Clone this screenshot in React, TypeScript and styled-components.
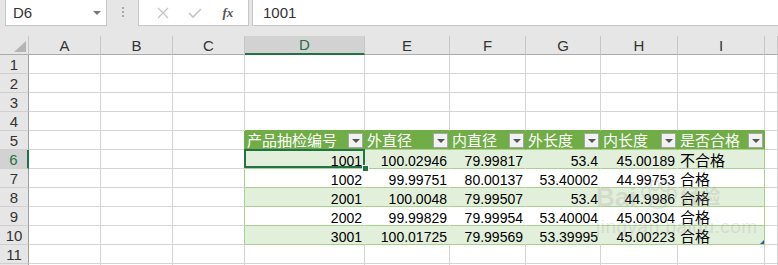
import { Fragment } from "react";
import styled, { createGlobalStyle } from "styled-components";

const GlobalStyle = createGlobalStyle`
  html, body { margin: 0; padding: 0; background: #fff; }
  body { font-family: "Liberation Sans", "Noto Sans CJK SC", sans-serif; }
`;

const GRID = "#d4d4d4";
const HEAD_BG = "#e6e6e6";
const SEL_BG = "#d2d2d2";
const XL_GREEN = "#217346";
const T_HEAD = "#70ad47";
const T_BAND = "#e2efda";
const T_LINE = "#a9d08e";

const Page = styled.div`
  position: relative;
  width: 778px;
  height: 265px;
  overflow: hidden;
  background: ${HEAD_BG};
`;

const FormulaBar = styled.div`
  display: flex;
  height: 26px;
  margin-bottom: 10px;
`;

const Box = styled.div`
  display: flex;
  align-items: center;
  box-sizing: border-box;
  height: 26px;
  background: #fff;
  border: 1px solid #c6c6c6;
  border-top: none;
`;

const NameBox = styled(Box)`
  margin-left: 5px;
  width: 102px;
  padding: 0 5px 0 7px;
  justify-content: space-between;
  font-size: 15px;
  color: #333;
`;

const Caret = styled.span`
  width: 0;
  height: 0;
  border-left: 4px solid transparent;
  border-right: 4px solid transparent;
  border-top: 4px solid #777;
`;

const Grip = styled.div`
  width: 31px;
  display: flex;
  flex-direction: column;
  align-items: center;
  justify-content: center;
  gap: 2px;
  padding-bottom: 2px;

  span {
    width: 2px;
    height: 2px;
    background: #a8a8a8;
  }
`;

const ButtonBox = styled(Box)`
  width: 111px;
  justify-content: space-around;
  padding: 0 4px 0 8px;
`;

const BarIcon = styled.span<{ $on?: boolean }>`
  display: flex;
  width: 20px;
  justify-content: center;
  color: ${(p) => (p.$on ? "#555" : "#c4c4c4")};
  font-family: "Liberation Serif", serif;
  font-style: italic;
  font-weight: bold;
  font-size: 13px;
`;

const InputBox = styled(Box)`
  flex: 1;
  margin-left: 3px;
  border-right: none;
  padding-left: 10px;
  font-size: 15px;
  color: #333;
`;

const Sheet = styled.div`
  display: grid;
  grid-template-columns: 29px 72px 72px 72px 120px 85px 76px 75px 77px 87px 1fr;
  grid-auto-rows: 19px;
`;

const Corner = styled.div`
  box-sizing: border-box;
  display: flex;
  align-items: flex-end;
  justify-content: flex-end;
  padding: 0 2px 2px 0;
  border-right: 1px solid #c6c6c6;
  border-bottom: 1px solid #ababab;
`;

const ColHead = styled.div<{ $sel?: boolean }>`
  box-sizing: border-box;
  display: flex;
  align-items: center;
  justify-content: center;
  background: ${(p) => (p.$sel ? SEL_BG : HEAD_BG)};
  border-right: 1px solid #c6c6c6;
  border-bottom: ${(p) => (p.$sel ? `2px solid ${XL_GREEN}` : "1px solid #ababab")};
  font-size: 15px;
  color: ${(p) => (p.$sel ? XL_GREEN : "#333")};
`;

const RowHead = styled.div<{ $sel?: boolean }>`
  box-sizing: border-box;
  display: flex;
  align-items: center;
  justify-content: center;
  padding-top: 1px;
  background: ${(p) => (p.$sel ? SEL_BG : HEAD_BG)};
  border-right: ${(p) => (p.$sel ? `2px solid ${XL_GREEN}` : "1px solid #9e9e9e")};
  border-bottom: 1px solid #cfcfcf;
  font-size: 15px;
  color: ${(p) => (p.$sel ? XL_GREEN : "#333")};
`;

const Cell = styled.div<{ $bg: string; $rb: string; $bb: string; $align: string }>`
  position: relative;
  box-sizing: border-box;
  display: flex;
  align-items: flex-end;
  justify-content: ${(p) => p.$align};
  padding: 0 2px;
  background: ${(p) => p.$bg};
  border-right: 1px solid ${(p) => p.$rb};
  border-bottom: 1px solid ${(p) => p.$bb};
  font-size: 14px;
  line-height: 14px;
  color: #000;
  white-space: nowrap;
`;

const HeadCell = styled(Cell)`
  align-items: center;
  justify-content: space-between;
  padding: 0 1px 0 2px;
  color: #fff;
`;

const Cjk = styled.span`
  font-family: "Noto Sans CJK SC", sans-serif;
  font-size: 15px;
  line-height: 15px;
  padding-bottom: 1px;
`;

const FilterButton = styled.span`
  box-sizing: border-box;
  display: flex;
  align-items: center;
  justify-content: center;
  width: 15px;
  height: 15px;
  background: #f2f2f2;
  border: 1px solid #a6a6a6;

  &::after {
    content: "";
    border-left: 4px solid transparent;
    border-right: 4px solid transparent;
    border-top: 4px solid #555;
    margin-top: 1px;
  }
`;

const Active = styled.div`
  position: absolute;
  left: -1px;
  top: -1px;
  right: -1px;
  bottom: 0;
  border: 2px solid ${XL_GREEN};
  z-index: 3;
  pointer-events: none;
`;

const FillHandle = styled.div`
  position: absolute;
  right: -5px;
  bottom: -4px;
  width: 5px;
  height: 5px;
  background: ${XL_GREEN};
  border: 1px solid #fff;
  z-index: 4;
`;

const ResizeMark = styled.svg`
  position: absolute;
  right: 0;
  bottom: 0;
`;

const Watermark = styled.div`
  position: absolute;
  left: 596px;
  top: 180px;
  color: rgba(170, 170, 170, 0.28);
  font-family: "Liberation Sans", "Noto Sans CJK SC", sans-serif;
  pointer-events: none;
  z-index: 5;
`;

const WmTop = styled.div`
  display: flex;
  align-items: flex-end;
  gap: 2px;
  font-size: 26px;
  font-weight: bold;
  line-height: 26px;
`;

const WmSub = styled.div`
  font-size: 19px;
  margin-top: 6px;
  letter-spacing: 0.5px;
`;

const cols = ["A", "B", "C", "D", "E", "F", "G", "H", "I", "J"];
const headers = ["产品抽检编号", "外直径", "内直径", "外长度", "内长度", "是否合格"];
const data = [
  ["1001", "100.02946", "79.99817", "53.4", "45.00189", "不合格"],
  ["1002", "99.99751", "80.00137", "53.40002", "44.99753", "合格"],
  ["2001", "100.0048", "79.99507", "53.4", "44.9986", "合格"],
  ["2002", "99.99829", "79.99954", "53.40004", "45.00304", "合格"],
  ["3001", "100.01725", "79.99569", "53.39995", "45.00223", "合格"],
];

function cellStyle(r: number, c: number) {
  const inTable = r >= 5 && r <= 10 && c >= 3 && c <= 8;
  const head = inTable && r === 5;
  let bg = "#fff";
  if (head) bg = T_HEAD;
  else if (inTable && r % 2 === 0) bg = T_BAND;
  let rb = GRID;
  let bb = GRID;
  if (inTable) {
    rb = c === 8 ? (head ? T_HEAD : T_LINE) : bg;
    bb = T_LINE;
  }
  if (c === 2 && r >= 5 && r <= 10) rb = r === 5 ? T_HEAD : T_LINE;
  if (r === 4 && c >= 3 && c <= 8) bb = T_HEAD;
  return { bg, rb, bb };
}

function renderCell(r: number, c: number) {
  const s = cellStyle(r, c);
  const key = `${r}-${c}`;
  if (r === 5 && c >= 3 && c <= 8) {
    return (
      <HeadCell key={key} $bg={s.bg} $rb={s.rb} $bb={s.bb} $align="flex-start">
        <Cjk>{headers[c - 3]}</Cjk>
        <FilterButton />
      </HeadCell>
    );
  }
  let content: React.ReactNode = null;
  let align = "flex-end";
  if (r >= 6 && r <= 10 && c >= 3 && c <= 8) {
    const v = data[r - 6][c - 3];
    if (c === 8) {
      align = "flex-start";
      content = <Cjk>{v}</Cjk>;
    } else content = v;
  }
  return (
    <Cell key={key} $bg={s.bg} $rb={s.rb} $bb={s.bb} $align={align}>
      {content}
      {r === 6 && c === 3 && (
        <>
          <Active />
          <FillHandle />
        </>
      )}
      {r === 10 && c === 8 && (
        <ResizeMark width="4" height="4" viewBox="0 0 4 4">
          <polygon points="4,0 4,4 0,4" fill="#3a56a8" />
        </ResizeMark>
      )}
    </Cell>
  );
}

export default function App() {
  const rows = Array.from({ length: 12 }, (_, i) => i + 1);
  return (
    <Page>
      <GlobalStyle />
      <FormulaBar>
        <NameBox>
          D6
          <Caret />
        </NameBox>
        <Grip>
          <span />
          <span />
          <span />
        </Grip>
        <ButtonBox>
          <BarIcon>
            <svg width="12" height="12" viewBox="0 0 12 12">
              <path d="M1 1 L11 11 M11 1 L1 11" stroke="currentColor" strokeWidth="1.3" />
            </svg>
          </BarIcon>
          <BarIcon>
            <svg width="14" height="12" viewBox="0 0 14 12">
              <path d="M1 6 L5 10 L13 2" stroke="currentColor" strokeWidth="1.6" fill="none" />
            </svg>
          </BarIcon>
          <BarIcon $on>fx</BarIcon>
        </ButtonBox>
        <InputBox>1001</InputBox>
      </FormulaBar>

      <Sheet>
        <Corner>
          <svg width="12" height="11" viewBox="0 0 12 11">
            <polygon points="12,0 12,11 0,11" fill="#b4b4b4" />
          </svg>
        </Corner>
        {cols.map((c) => (
          <ColHead key={c} $sel={c === "D"}>
            {c === "J" ? "" : c}
          </ColHead>
        ))}
        {rows.map((r) => (
          <Fragment key={r}>
            <RowHead $sel={r === 6}>{r <= 11 ? r : ""}</RowHead>
            {cols.map((_, c) => renderCell(r, c))}
          </Fragment>
        ))}
      </Sheet>

      <Watermark>
        <WmTop>
          Bai
          <svg width="40" height="30" viewBox="0 0 40 30">
            <g fill="none" stroke="currentColor" strokeWidth="2">
              <ellipse cx="8" cy="12" rx="4" ry="5" />
              <ellipse cx="17" cy="5" rx="4" ry="5" />
              <ellipse cx="27" cy="6" rx="4" ry="5" />
              <ellipse cx="34" cy="14" rx="4" ry="5" />
              <path d="M12 26 C14 16 26 16 28 26 C24 29 16 29 12 26 Z" />
            </g>
          </svg>
          <span style={{ fontSize: 20 }}>经验</span>
        </WmTop>
        <WmSub>jingyan.baidu.com</WmSub>
      </Watermark>
    </Page>
  );
}
